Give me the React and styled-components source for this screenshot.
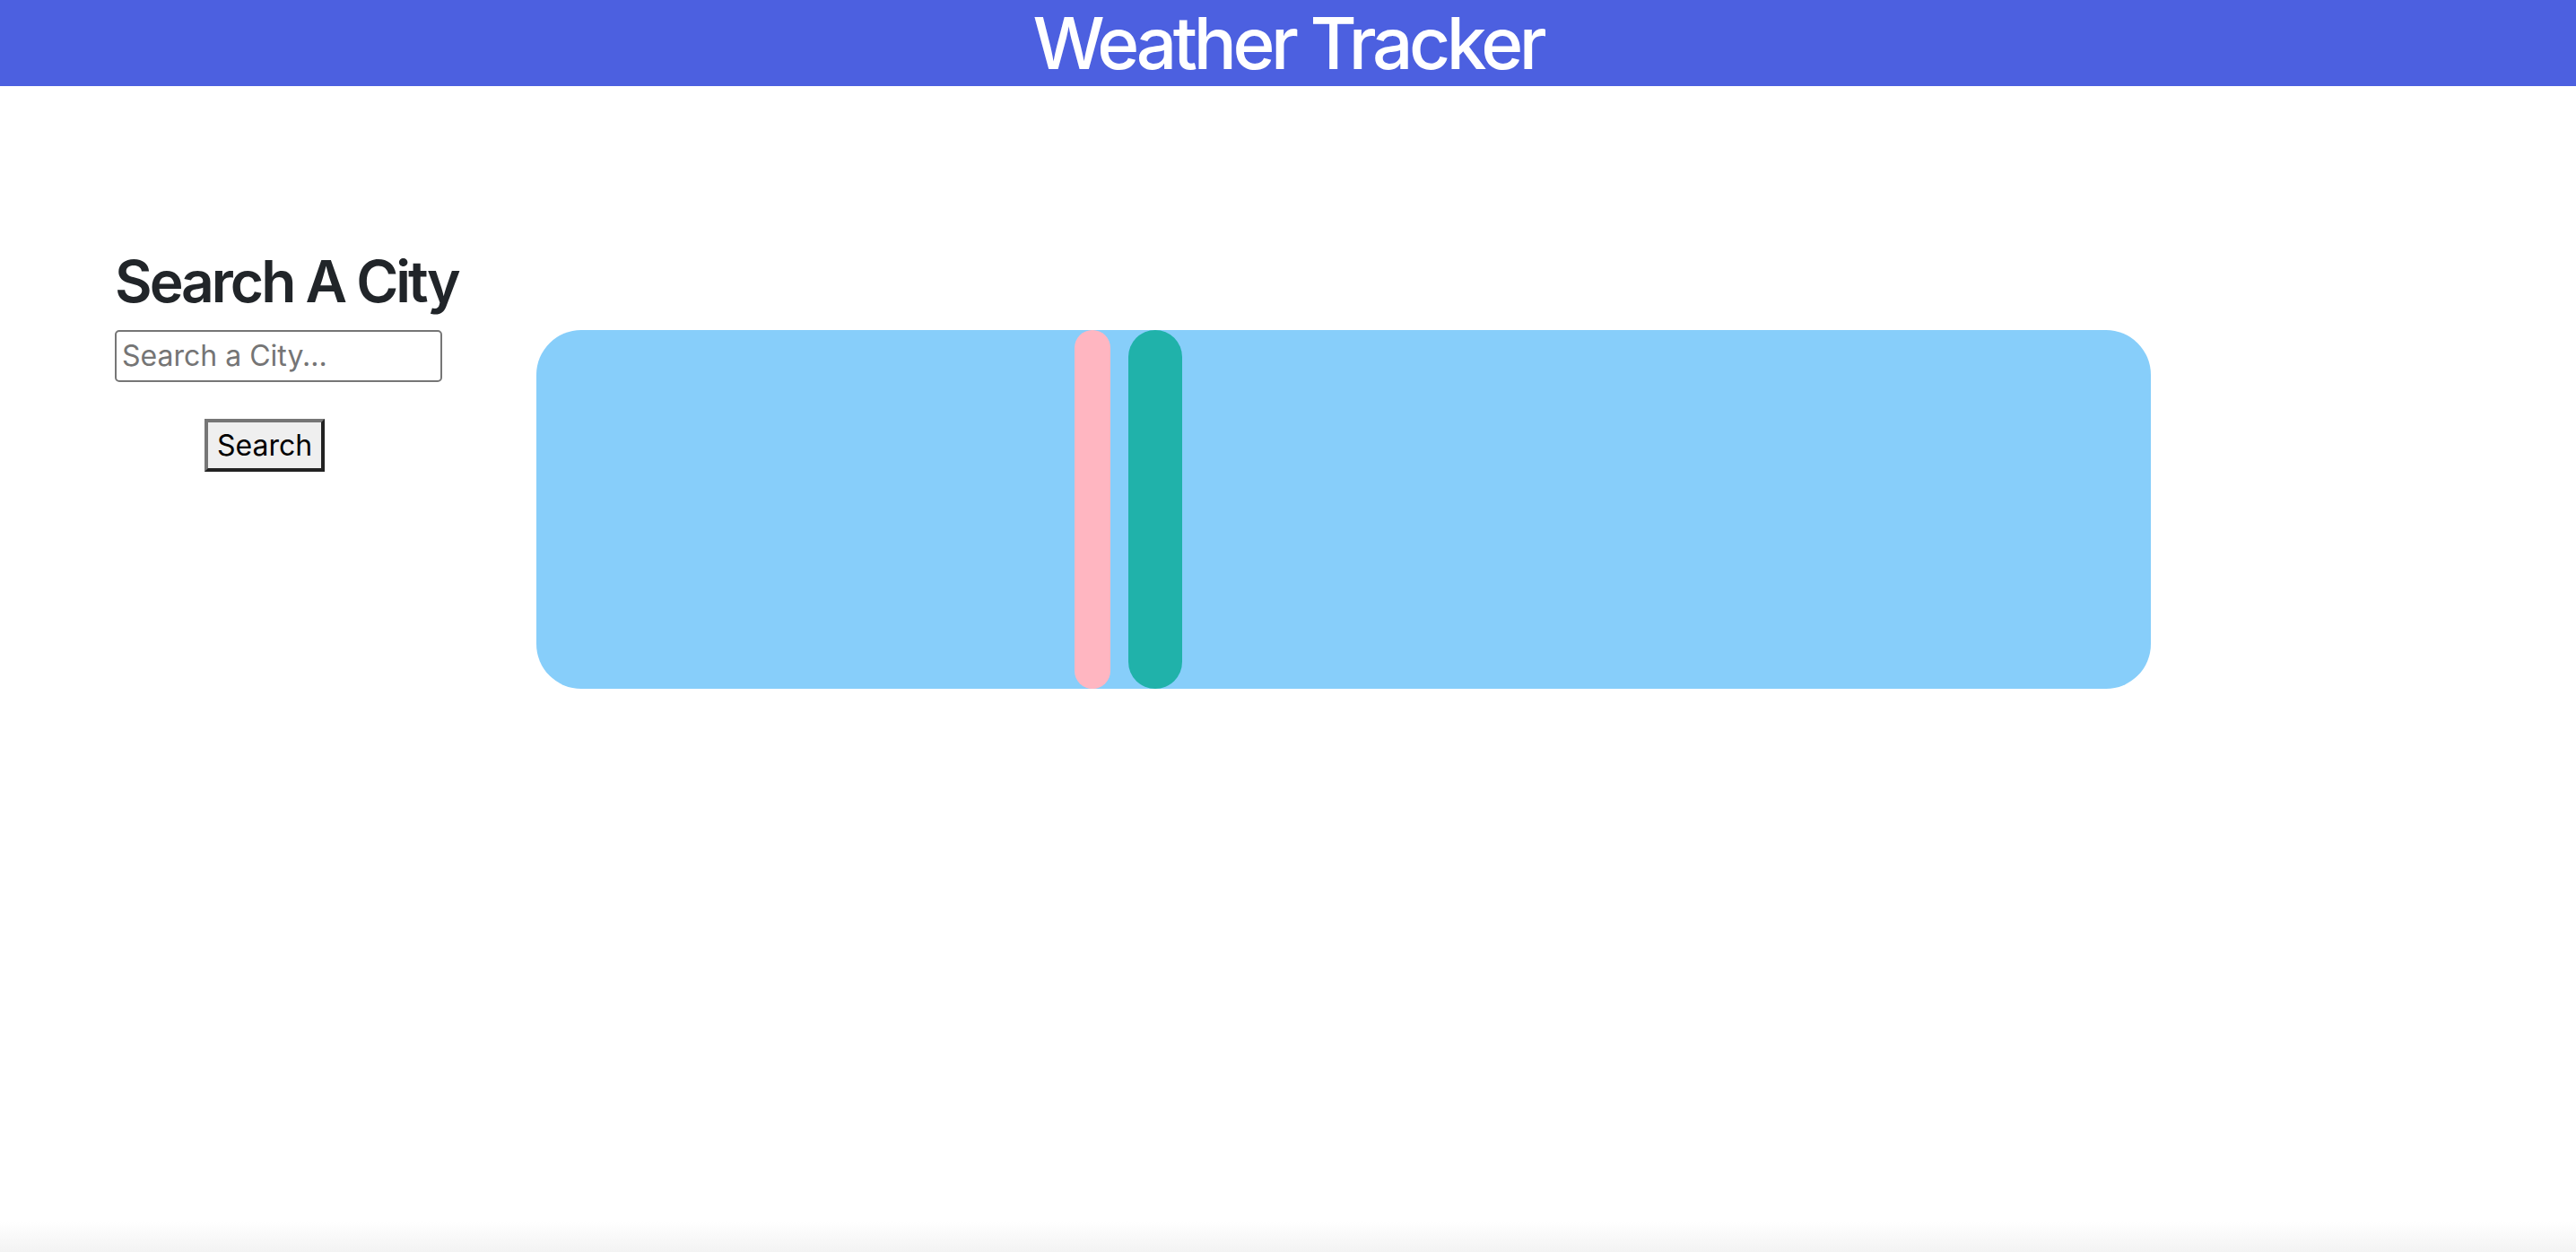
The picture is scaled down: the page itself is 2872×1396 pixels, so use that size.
import React, { useState } from 'react'
import styled, { createGlobalStyle } from 'styled-components'

const GlobalStyle = createGlobalStyle`
*{
  margin: 0;
  padding: 0;
  box-sizing: border-box;
}
body{
  font-family: Inter, "Noto Sans", "Liberation Sans", sans-serif;
  color: #212529;
  background: #fff;
}
`

const Page = styled.div`
min-height: 1396px;
background: linear-gradient(to bottom, #fff calc(100% - 34px), #f3f3f3);
`

const Header = styled.header`
height: 96px;
background-color: #4c60e0;
display: flex;
justify-content: center;
`

const Title = styled.h1`
color: #fff;
font-size: 80px;
font-weight: 500;
letter-spacing: -4.4px;
line-height: 96px;
`

const Main = styled.main`
display: flex;
align-items: flex-start;
padding: 180px 0 0 128px;
`

const Sidebar = styled.section`
width: 470px;
display: flex;
flex-direction: column;
align-items: flex-start;
`

const SideTitle = styled.h2`
font-size: 64px;
font-weight: 600;
letter-spacing: -3px;
line-height: 1.2;
margin-bottom: 15px;
`

const CityInput = styled.input`
width: 365px;
height: 58px;
border: 2px solid #767676;
border-radius: 5px;
padding: 0 6px;
font-family: inherit;
font-size: 32px;
color: #212529;
&::placeholder{
  color: #757575;
}
`

const SearchBtn = styled.button`
margin: 41px 0 0 100px;
height: 59px;
padding: 0 10px;
border-style: solid;
border-width: 4px;
border-color: #767676 #222 #222 #767676;
background: #efefef;
color: #000;
font-family: inherit;
font-size: 32px;
`

const Card = styled.section`
margin-top: 92px;
width: 1800px;
height: 400px;
border-radius: 50px;
background-color: #87cefa;
display: grid;
grid-template-columns: repeat(3, 1fr);
`

const Forecast = styled.div`
grid-column: 2;
display: flex;
gap: 20px;
`

const Bar = styled.div`
width: ${props => props.w}px;
height: 100%;
border-radius: ${props => props.w / 2}px;
background-color: ${props => props.color};
`

export default function App() {
  const [city, setCity] = useState('')

  return (
    <Page>
      <GlobalStyle />
      <Header>
        <Title>Weather Tracker</Title>
      </Header>

      <Main>
        <Sidebar>
          <SideTitle>Search A City</SideTitle>
          <CityInput
            placeholder="Search a City..."
            value={city}
            onChange={e => setCity(e.target.value)}
          />
          <SearchBtn>Search</SearchBtn>
        </Sidebar>

        <Card>
          <div />
          <Forecast>
            <Bar w={40} color="#ffb6c1" />
            <Bar w={60} color="#20b2aa" />
          </Forecast>
        </Card>
      </Main>
    </Page>
  )
}
